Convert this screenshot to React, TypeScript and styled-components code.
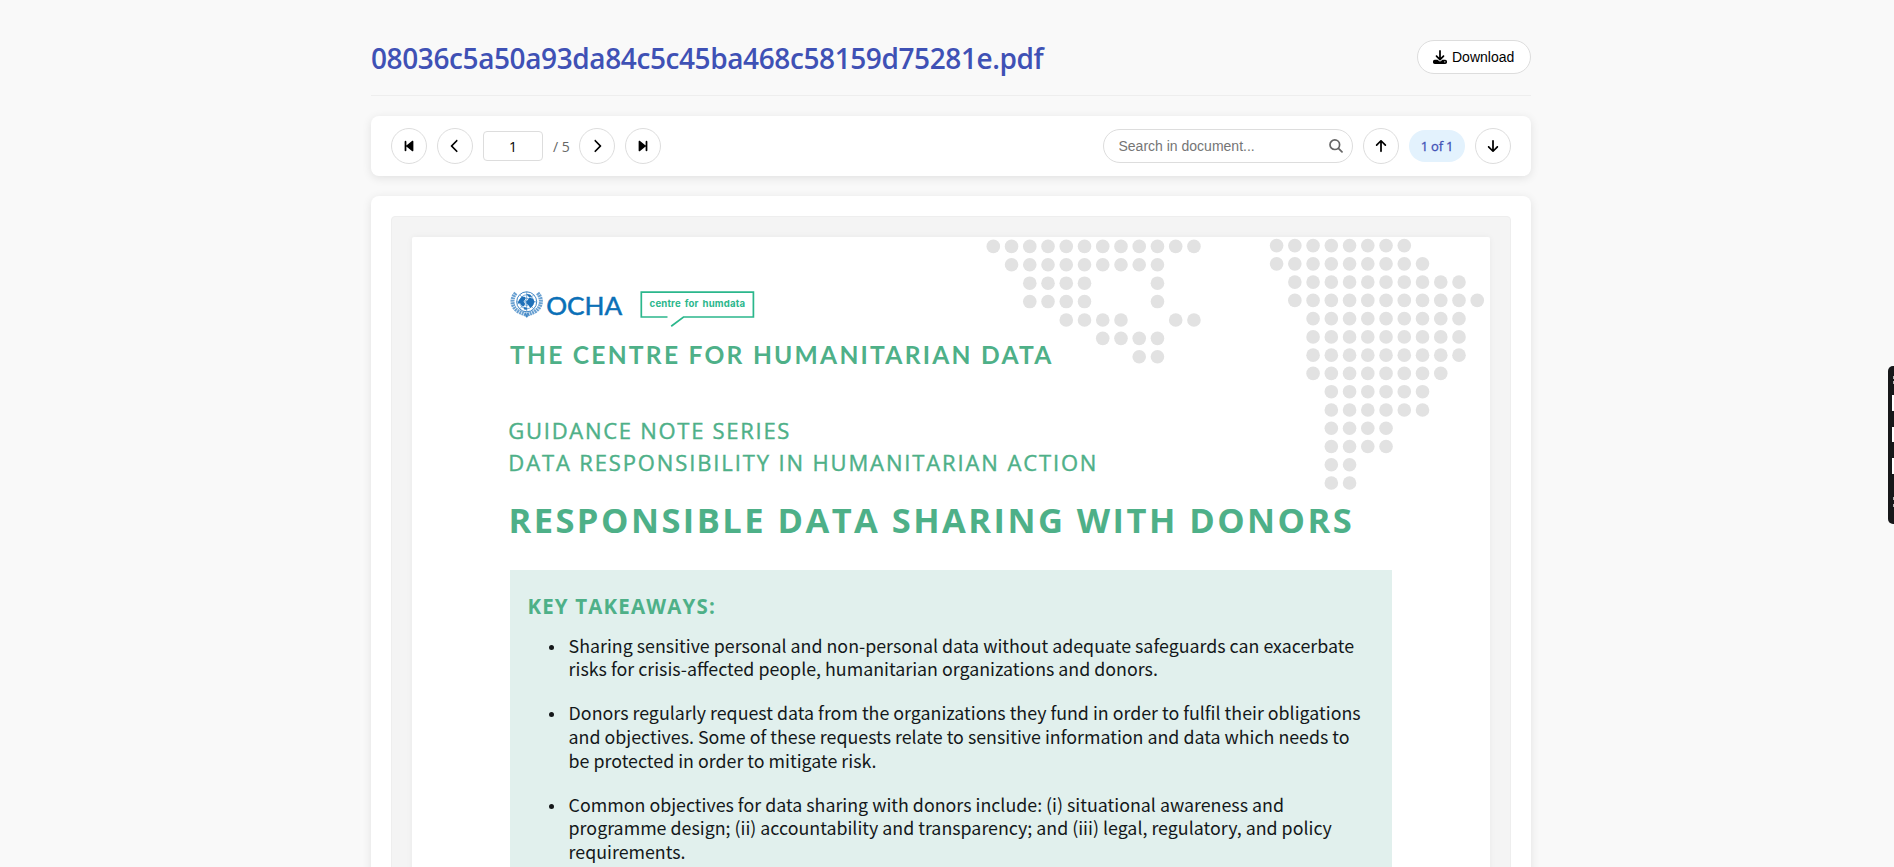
import React from 'react';
import styled, { createGlobalStyle } from 'styled-components';
import {
  FaBackwardStep,
  FaForwardStep,
  FaChevronLeft,
  FaChevronRight,
  FaArrowUp,
  FaArrowDown,
  FaDownload,
} from 'react-icons/fa6';

const GlobalStyle = createGlobalStyle`
  * { box-sizing: border-box; }
  body {
    margin: 0;
    height: 867px;
    overflow: hidden;
    background: #f9f9f9;
    font-family: 'Open Sans', sans-serif;
  }
  h1, h2, h3, p, ul { margin: 0; padding: 0; }
`;

const Shell = styled.div`
  width: 1160px;
  height: 867px;
  margin-left: 371px;
  padding-top: 20px;
  overflow-x: visible;
  overflow-y: clip;
`;

const Header = styled.header`
  display: flex;
  justify-content: space-between;
  align-items: center;
  height: 76px;
  border-bottom: 1px solid #eee;
  margin-bottom: 20px;
`;

const FileName = styled.h1`
  font-size: 28px;
  font-weight: 600;
  line-height: 38px;
  letter-spacing: -0.4px;
  color: #3f51b5;
  white-space: nowrap;
`;

const DownloadButton = styled.button`
  display: flex;
  align-items: center;
  gap: 5px;
  width: 114px;
  height: 34px;
  padding: 0 15px;
  margin-top: -2px;
  border: 1px solid #ddd;
  border-radius: 17px;
  background: #fff;
  color: #000;
  font: 14px 'Liberation Sans', sans-serif;
`;

const Card = styled.section`
  background: #fff;
  border-radius: 8px;
  box-shadow: 0 2px 10px rgba(0, 0, 0, 0.1);
`;

const Toolbar = styled(Card)`
  display: flex;
  justify-content: space-between;
  align-items: center;
  height: 60px;
  padding: 0 20px;
  margin-bottom: 20px;
`;

const Group = styled.div`
  display: flex;
  align-items: center;
  gap: 10px;
`;

const RoundButton = styled.button`
  display: flex;
  align-items: center;
  justify-content: center;
  width: 36px;
  height: 36px;
  padding: 0;
  border: 1px solid #ddd;
  border-radius: 50%;
  background: #fff;
  color: #000;
`;

const PageInput = styled.input`
  width: 60px;
  height: 30px;
  padding: 0 1px;
  border: 1px solid #ddd;
  border-radius: 4px;
  text-align: center;
  color: #000;
  font: 14px 'Open Sans', sans-serif;
`;

const PageTotal = styled.span`
  width: 16px;
  white-space: nowrap;
  font-size: 14px;
  color: #666;
`;

const SearchBox = styled.label`
  display: flex;
  align-items: center;
  width: 250px;
  height: 34px;
  padding: 0 9px 0 14.5px;
  border: 1px solid #ddd;
  border-radius: 17px;
`;

const SearchInput = styled.input`
  flex: 1;
  min-width: 0;
  padding: 0;
  border: 0;
  background: none;
  font: 14px 'Liberation Sans', sans-serif;
  &::placeholder { color: #757575; }
`;

const MatchCount = styled.span`
  width: 56px;
  height: 32px;
  border-radius: 16px;
  background: #e3f2fd;
  color: #3f51b5;
  text-align: center;
  font-size: 13px;
  line-height: 32px;
  letter-spacing: -0.2px;
  -webkit-text-stroke: 0.3px #3f51b5;
`;

const Viewer = styled(Card)`
  padding: 20px;
  height: 1200px;
`;

const Canvas = styled.div`
  height: 1160px;
  padding: 20px;
  border: 1px solid #eee;
  border-radius: 4px;
  background: #f4f4f4;
`;

const Sheet = styled.article`
  position: relative;
  height: 1100px;
  padding: 51px 98px 0;
  border-radius: 2px;
  background: #fff;
  box-shadow: 0 0 6px rgba(0, 0, 0, 0.05);
  color: #4eb088;
`;

const DotMap = styled.svg`
  position: absolute;
  left: 0;
  top: 0;
`;

const Logos = styled.svg`
  display: block;
`;

const Organisation = styled.h2`
  margin-top: 1px;
  font: 700 24.6px/32px Lato, sans-serif;
  letter-spacing: 2.24px;
  white-space: nowrap;
`;

const Series = styled.div`
  margin: 42.7px 0 0 -1.7px;
`;

const SeriesLine = styled.p<{ $tracking: number }>`
  font-size: 22px;
  line-height: 32.3px;
  letter-spacing: ${p => p.$tracking}px;
  white-space: nowrap;
  -webkit-text-stroke: 0.4px #4eb088;
`;

const DocumentTitle = styled.h2`
  margin: 19.4px 0 0 -1.6px;
  font-size: 34.5px;
  font-weight: 700;
  line-height: 44px;
  letter-spacing: 2.45px;
  white-space: nowrap;
`;

const Takeaways = styled.section`
  width: 882px;
  height: 700px;
  margin-top: 28.6px;
  padding: 22px 17.4px;
  background: #e1f0ed;
`;

const TakeawaysTitle = styled.h3`
  font-size: 20.5px;
  font-weight: 700;
  line-height: 28px;
  letter-spacing: 1.16px;
`;

const Bullets = styled.ul`
  margin-top: 13.5px;
  list-style: none;
  color: #14181a;
  font: 17.82px/23.65px 'Noto Sans CJK JP', sans-serif;
`;

const Bullet = styled.li`
  display: flex;
  margin-bottom: 20.4px;
  white-space: pre;
`;

const Marker = styled.span`
  flex: none;
  width: 5px;
  height: 5px;
  margin: 11px 15px 0 21.2px;
  border-radius: 50%;
  background: #14181a;
`;

const SidePanel = styled.aside`
  position: fixed;
  left: 1888px;
  top: 366px;
  width: 6px;
  height: 158px;
  padding: 29px 0 0 4px;
  display: flex;
  flex-direction: column;
  gap: 16px;
  border-radius: 5px 0 0 5px;
  background: #17181a;
`;

const SideSlot = styled.span`
  height: 15.5px;
  background: #fff;
`;

const SideMark = styled.span<{ $top: number }>`
  position: absolute;
  left: 5px;
  top: ${p => p.$top}px;
  width: 1px;
  height: 3px;
  background: #b5b5b5;
`;

type Run = [row: number, from: number, to: number];

const northRuns: Run[] = [
  [0, 0, 11], [1, 1, 9], [2, 2, 5], [2, 9, 9], [3, 2, 5], [3, 9, 9],
  [4, 4, 7], [4, 10, 11], [5, 6, 9], [6, 8, 9],
];
const southRuns: Run[] = [
  [0, 0, 7], [1, 0, 8], [2, 1, 10], [3, 1, 11], [4, 2, 10], [5, 2, 10], [6, 2, 10],
  [7, 2, 9], [8, 3, 8], [9, 3, 8], [10, 3, 6], [11, 3, 6], [12, 3, 4], [13, 3, 4],
];

function Dots({ runs, x, y, dy }: { runs: Run[]; x: number; y: number; dy: number }) {
  return (
    <g fill="#e2e2e2">
      {runs.flatMap(([row, from, to]) =>
        Array.from({ length: to - from + 1 }, (_, i) => (
          <circle key={`${row}-${from + i}`} cx={x + (from + i) * 18.24} cy={y + row * dy} r={6.8} />
        )),
      )}
    </g>
  );
}

function LogoRow() {
  return (
    <Logos width="260" height="50" viewBox="0 0 260 50">
      <g fill="none" stroke="#2a78bd">
        <circle cx="16.7" cy="13.8" r="10" strokeWidth="0.9" />
        <circle cx="16.7" cy="13.8" r="7" strokeWidth="0.6" />
        <circle cx="16.7" cy="13.8" r="3.6" strokeWidth="0.6" />
        <path d="M16.7 3.800v20M6.700 13.800h20M9.700 6.800l14 14M23.700 6.800l-14 14" strokeWidth="0.6" />
        <path d="M5.800 5C0.600 11 1.400 19.500 9 23.800C12 25.300 15 26 18.500 28" strokeWidth="4" strokeDasharray="1.900 0.600" opacity="0.7" />
        <path d="M27.600 5C32.800 11 32 19.500 24.400 23.800C21.400 25.300 18.400 26 14.900 28" strokeWidth="4" strokeDasharray="1.900 0.600" opacity="0.7" />
      </g>
      <path
        fill="#1f70b8"
        d="M9 12l3-3.500 3.500 .5-.4 3-2 1.200 1.800 2-.8 3.200-2.600-.8-1.400-2.400-2.600.600zM17 13l2.400-3.600 3.600 1.400 1.600 3-1.800 3.800-2.600 2.400-1.600-2.800-2.200-1.600zM16.500 6l3.500.4 2 2-3 .9zM13.500 19l3 .5.7 2-2.700.2z"
      />
      <text x="36.200" y="27" fontFamily="Lato, sans-serif" fontSize="25.600" fontWeight="400" fill="#0b70b7" stroke="#0b70b7" strokeWidth="0.5" textLength="76" lengthAdjust="spacingAndGlyphs">
        OCHA
      </text>
      <path d="M157.500 29H131.300V4.200H243.400V29H173.500L161.200 38.200" fill="none" stroke="#2bb78c" strokeWidth="1.700" />
      <text x="139.600" y="19.400" fontFamily="Inter, sans-serif" fontSize="9.600" fontWeight="700" fill="#2bb78c" wordSpacing="1.500" textLength="95.400">
        centre for humdata
      </text>
    </Logos>
  );
}

const takeaways: string[] = [
  'Sharing sensitive personal and non-personal data without adequate safeguards can exacerbate\nrisks for crisis-affected people, humanitarian organizations and donors.',
  'Donors regularly request data from the organizations they fund in order to fulfil their obligations\nand objectives. Some of these requests relate to sensitive information and data which needs to\nbe protected in order to mitigate risk.',
  'Common objectives for data sharing with donors include: (i) situational awareness and\nprogramme design; (ii) accountability and transparency; and (iii) legal, regulatory, and policy\nrequirements.',
];

export default function App() {
  return (
    <>
      <GlobalStyle />
      <Shell>
        <Header>
          <FileName>08036c5a50a93da84c5c45ba468c58159d75281e.pdf</FileName>
          <DownloadButton><FaDownload size={14} />Download</DownloadButton>
        </Header>

        <Toolbar>
          <Group>
            <RoundButton aria-label="First page"><FaBackwardStep size={14} /></RoundButton>
            <RoundButton aria-label="Previous page"><FaChevronLeft size={14} /></RoundButton>
            <PageInput defaultValue="1" />
            <PageTotal>/ 5</PageTotal>
            <RoundButton aria-label="Next page"><FaChevronRight size={14} /></RoundButton>
            <RoundButton aria-label="Last page"><FaForwardStep size={14} /></RoundButton>
          </Group>
          <Group>
            <SearchBox>
              <SearchInput placeholder="Search in document..." />
              <svg width="14" height="14" viewBox="0 0 14 14" fill="none" stroke="#666" strokeWidth="1.7" strokeLinecap="round">
                <circle cx="5.8" cy="5.7" r="4.8" />
                <path d="M9.4 9.3L13 12.900" />
              </svg>
            </SearchBox>
            <RoundButton aria-label="Previous match"><FaArrowUp size={14} /></RoundButton>
            <MatchCount>1 of 1</MatchCount>
            <RoundButton aria-label="Next match"><FaArrowDown size={14} /></RoundButton>
          </Group>
        </Toolbar>

        <Viewer>
          <Canvas>
            <Sheet>
              <DotMap width="1078" height="260">
                <Dots runs={northRuns} x={581.3} y={9.4} dy={18.39} />
                <Dots runs={southRuns} x={864.6} y={8.6} dy={18.26} />
              </DotMap>
              <LogoRow />
              <Organisation>THE CENTRE FOR HUMANITARIAN DATA</Organisation>
              <Series>
                <SeriesLine $tracking={1.72}>GUIDANCE NOTE SERIES</SeriesLine>
                <SeriesLine $tracking={1.87}>DATA RESPONSIBILITY IN HUMANITARIAN ACTION</SeriesLine>
              </Series>
              <DocumentTitle>RESPONSIBLE DATA SHARING WITH DONORS</DocumentTitle>
              <Takeaways>
                <TakeawaysTitle>KEY TAKEAWAYS:</TakeawaysTitle>
                <Bullets>
                  {takeaways.map(text => (
                    <Bullet key={text}><Marker />{text}</Bullet>
                  ))}
                </Bullets>
              </Takeaways>
            </Sheet>
          </Canvas>
        </Viewer>
      </Shell>

      <SidePanel>
        <SideSlot />
        <SideSlot />
        <SideSlot />
        <SideMark $top={10} />
        <SideMark $top={15} />
        <SideMark $top={131} />
        <SideMark $top={138} />
      </SidePanel>
    </>
  );
}
